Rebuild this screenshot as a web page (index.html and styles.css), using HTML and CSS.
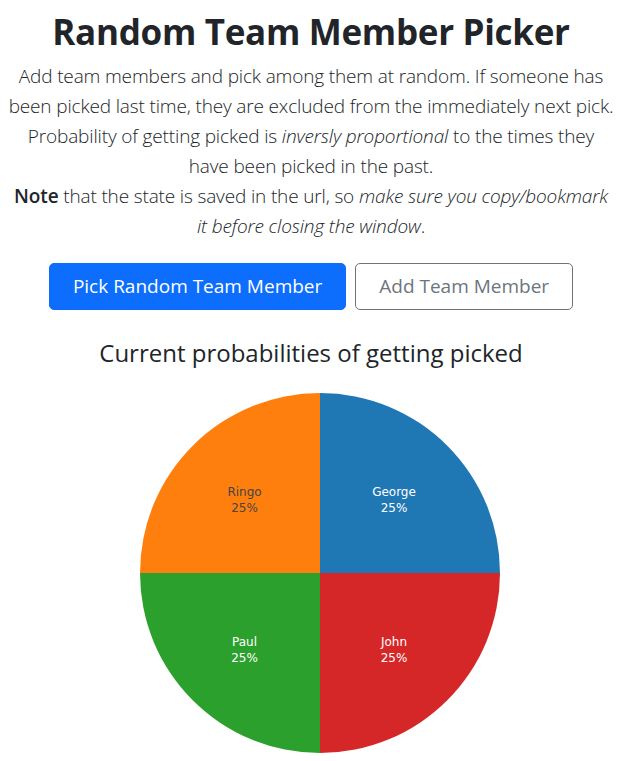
FILE: index.html
```html
<!DOCTYPE html>
<html lang="en">
<head>
<meta charset="utf-8">
<title>Random Team Member Picker</title>
<link rel="stylesheet" href="styles.css">
</head>
<body>
<main class="container">
  <h1 class="title">Random Team Member Picker</h1>
  <p class="lead">Add team members and pick among them at random. If someone has been picked last time, they are excluded from the immediately next pick. Probability of getting picked is <em>inversly proportional</em> to the times they have been picked in the past.<br><strong>Note</strong> that the state is saved in the url, so <em>make sure you copy/bookmark it before closing the window</em>.</p>
  <div class="actions">
    <button class="btn btn-primary">Pick Random Team Member</button>
    <button class="btn btn-outline">Add Team Member</button>
  </div>
  <h4 class="chart-title">Current probabilities of getting picked</h4>
  <div class="chart">
    <svg width="360" height="360" viewBox="0 0 360 360" class="pie">
      <path d="M180,180 L180,0 A180,180 0 0,1 360,180 Z" fill="#1f77b4"/>
      <path d="M180,180 L360,180 A180,180 0 0,1 180,360 Z" fill="#d62728"/>
      <path d="M180,180 L180,360 A180,180 0 0,1 0,180 Z" fill="#2ca02c"/>
      <path d="M180,180 L0,180 A180,180 0 0,1 180,0 Z" fill="#ff7f0e"/>
      <g class="lbl dark">
        <text x="104.5" y="103">Ringo</text>
        <text x="104.5" y="119">25%</text>
      </g>
      <g class="lbl">
        <text x="254" y="103">George</text>
        <text x="254" y="119">25%</text>
        <text x="104.5" y="253">Paul</text>
        <text x="104.5" y="269">25%</text>
        <text x="254" y="253">John</text>
        <text x="254" y="269">25%</text>
      </g>
    </svg>
  </div>
</main>
</body>
</html>
```
FILE: styles.css
```css
html, body {
  margin: 0;
  padding: 0;
  background: #fff;
}
body {
  font-family: "Open Sans", "Noto Sans", sans-serif;
  color: #212529;
}
.container {
  padding: 0 8px;
  text-align: center;
}
.title {
  margin: 0;
  padding-top: 10px;
  font-size: 35px;
  font-weight: 700;
  line-height: 44px;
  letter-spacing: -0.3px;
}
.lead {
  margin: 7px 0 0;
  font-size: 19px;
  font-weight: 300;
  line-height: 30px;
  letter-spacing: -0.15px;
}
.lead strong {
  font-weight: 600;
}
.actions {
  display: flex;
  justify-content: center;
  gap: 9px;
  margin-top: 22px;
}
.btn {
  font-family: inherit;
  font-size: 19px;
  line-height: 27px;
  padding: 9px 23px;
  border-radius: 5px;
  border: 1px solid;
  background: #fff;
}
.btn-primary {
  background: #0d6efd;
  border-color: #0d6efd;
  color: #fff;
}
.btn-outline {
  border-color: #6c757d;
  color: #6c757d;
}
.chart-title {
  margin: 28px 0 0;
  font-size: 24px;
  font-weight: 400;
  line-height: 30px;
}
.chart {
  display: flex;
  justify-content: center;
  padding-left: 18px;
  margin-top: 25px;
}
.pie {
  display: block;
}
.lbl text {
  font-family: "DejaVu Sans", sans-serif;
  font-size: 12px;
  fill: #fff;
  text-anchor: middle;
}
.lbl.dark text {
  fill: #444;
}
```
